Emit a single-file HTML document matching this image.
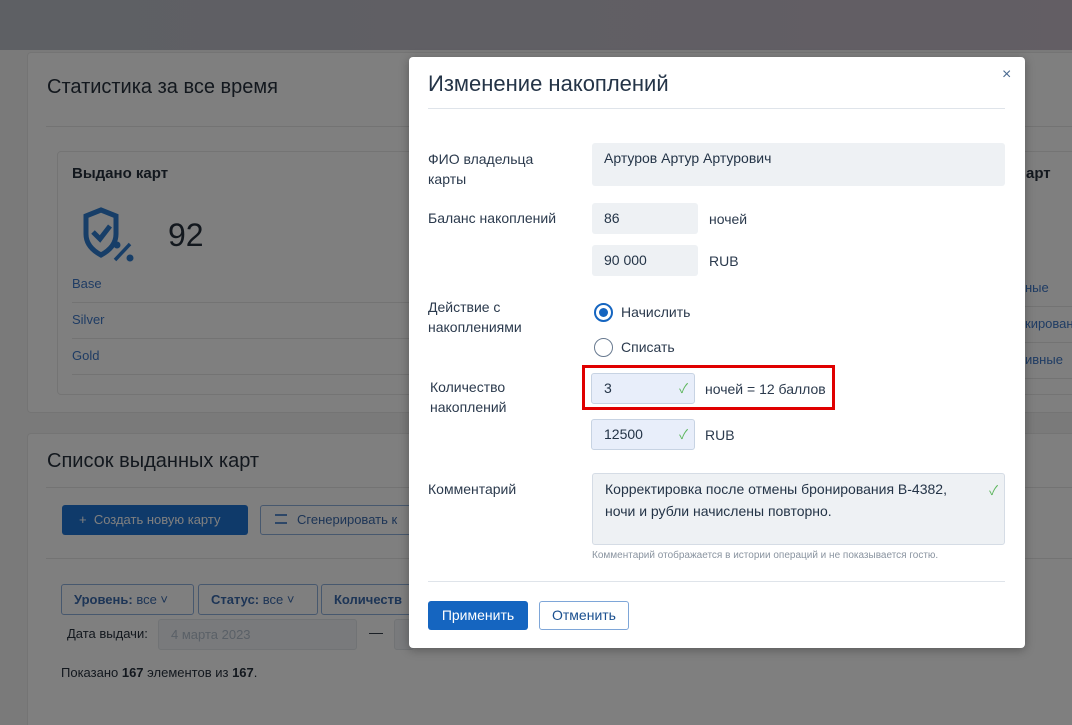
<!DOCTYPE html>
<html><head><meta charset="utf-8"><style>
*{box-sizing:border-box;margin:0;padding:0}
html,body{width:1072px;height:725px;overflow:hidden}
body{background:#f4f4f5;font-family:"Liberation Sans","Noto Sans CJK SC",sans-serif;position:relative;color:#1f2a38}
.a{position:absolute}
.top{left:0;top:0;width:1072px;height:50px;background:linear-gradient(90deg,#bcc0c8,#c6bcc8)}
.card{background:#fff;border:1px solid #e8e8e8;border-radius:4px}
.dk{color:#26303d}
.bl{color:#3f78c8}
.hr{height:1px;background:#e6e6e6}
.ov{left:0;top:0;width:1072px;height:725px;background:rgba(0,0,0,.5)}
.modal{left:409px;top:57px;width:616px;height:591px;background:#fff;border-radius:4px;box-shadow:0 2px 10px rgba(0,0,0,.3)}
.lbl{font-size:14px;color:#2b3a4d;line-height:20px}
.inp{background:#eef1f4;border-radius:3px;font-size:14px;color:#243447;padding-left:12px}
.inpv{background:#e8eefa;border:1px solid #c7d3e3;border-radius:3px;font-size:14px;color:#243447;padding-left:12px}
.ck{color:#5cb65c;font-size:13px}
</style></head><body>
<div class="a top"></div>
<div class="a card" style="left:27px;top:52px;width:1060px;height:361px"></div>
<div class="a dk" style="left:47px;top:76px;font-size:20px">Статистика за все время</div>
<div class="a hr" style="left:46px;top:126px;width:1030px"></div>
<div class="a card" style="left:57px;top:151px;width:1030px;height:244px"></div>
<div class="a dk" style="left:72px;top:165px;font-size:15px;font-weight:bold">Выдано карт</div>
<svg class="a" style="left:82px;top:207px" width="52" height="58" viewBox="0 0 52 58"><path d="M19 3 L34 9 V27 Q34 40 19 48 Q4 40 4 27 V9 Z" fill="none" stroke="#2e7dd0" stroke-width="5"/><path d="M11 25 L18 32 L28 19" fill="none" stroke="#2e7dd0" stroke-width="5"/><circle cx="35" cy="38" r="3.5" fill="#2e7dd0"/><circle cx="48" cy="51" r="3.5" fill="#2e7dd0"/><path d="M33 53 L48 37" stroke="#2e7dd0" stroke-width="3.5"/></svg>
<div class="a dk" style="left:168px;top:217px;font-size:32px">92</div>
<div class="a bl" style="left:72px;top:276px;font-size:13px">Base</div>
<div class="a hr" style="left:72px;top:302px;width:340px"></div>
<div class="a bl" style="left:72px;top:312px;font-size:13px">Silver</div>
<div class="a hr" style="left:72px;top:338px;width:340px"></div>
<div class="a bl" style="left:72px;top:348px;font-size:13px">Gold</div>
<div class="a hr" style="left:72px;top:374px;width:340px"></div>
<div class="a dk" style="left:1026px;top:165px;font-size:15px;font-weight:bold">арт</div>
<div class="a bl" style="left:1025px;top:280px;font-size:13px">ные</div>
<div class="a hr" style="left:1025px;top:306px;width:50px"></div>
<div class="a bl" style="left:1025px;top:316px;font-size:13px">кирован</div>
<div class="a hr" style="left:1025px;top:342px;width:50px"></div>
<div class="a bl" style="left:1025px;top:352px;font-size:13px">ивные</div>
<div class="a hr" style="left:1025px;top:378px;width:50px"></div>

<div class="a card" style="left:27px;top:433px;width:1060px;height:300px"></div>
<div class="a dk" style="left:47px;top:450px;font-size:20px">Список выданных карт</div>
<div class="a hr" style="left:46px;top:487px;width:1030px"></div>
<div class="a" style="left:62px;top:505px;width:186px;height:30px;background:#1e74d4;border-radius:3px;color:#fff;font-size:13px;line-height:30px;padding-left:17px">+&nbsp; Создать новую карту</div>
<div class="a" style="left:260px;top:505px;width:160px;height:30px;border:1px solid #8fb0dc;border-radius:3px;color:#3b6aad;font-size:13px;line-height:28px;padding-left:36px">Сгенерировать к</div>
<div class="a" style="left:275px;top:514px;width:12px;height:10px;border-top:2px solid #5a8ed0;border-bottom:2px solid #5a8ed0"></div>
<div class="a hr" style="left:46px;top:558px;width:1030px"></div>
<div class="a" style="left:61px;top:584px;width:133px;height:31px;border:1px solid #8fb0dc;border-radius:3px;color:#3b6aad;font-size:13px;line-height:29px;padding-left:12px"><b>Уровень:</b> все ˅</div>
<div class="a" style="left:198px;top:584px;width:120px;height:31px;border:1px solid #8fb0dc;border-radius:3px;color:#3b6aad;font-size:13px;line-height:29px;padding-left:12px"><b>Статус:</b> все ˅</div>
<div class="a" style="left:321px;top:584px;width:100px;height:31px;border:1px solid #8fb0dc;border-radius:3px;color:#3b6aad;font-size:13px;line-height:29px;padding-left:12px"><b>Количеств</b></div>
<div class="a dk" style="left:67px;top:626px;font-size:13px">Дата выдачи:</div>
<div class="a" style="left:158px;top:619px;width:199px;height:31px;background:#f2f5f8;border:1px solid #e2e6ea;border-radius:3px;color:#b4c0ce;font-size:13px;line-height:29px;padding-left:12px">4 марта 2023</div>
<div class="a" style="left:369px;top:624px;color:#26303d;font-size:14px">—</div>
<div class="a" style="left:394px;top:619px;width:20px;height:31px;background:#f2f5f8;border:1px solid #e2e6ea;border-radius:3px"></div>
<div class="a dk" style="left:61px;top:665px;font-size:13px">Показано <b>167</b> элементов из <b>167</b>.</div>

<div class="a ov"></div>
<div class="a modal"></div>
<div class="a" style="left:428px;top:71px;font-size:22px;color:#243447">Изменение накоплений</div>
<div class="a" style="left:1002px;top:66px;font-size:16px;color:#4a6a90">×</div>
<div class="a" style="left:428px;top:108px;width:577px;height:1px;background:#dfe4ea"></div>
<div class="a lbl" style="left:428px;top:149px;width:130px">ФИО владельца карты</div>
<div class="a inp" style="left:592px;top:143px;width:413px;height:43px;line-height:30px">Артуров Артур Артурович</div>
<div class="a lbl" style="left:428px;top:208px">Баланс накоплений</div>
<div class="a inp" style="left:592px;top:203px;width:106px;height:31px;line-height:31px">86</div>
<div class="a lbl" style="left:709px;top:209px">ночей</div>
<div class="a inp" style="left:592px;top:245px;width:106px;height:31px;line-height:31px">90 000</div>
<div class="a lbl" style="left:709px;top:251px">RUB</div>
<div class="a lbl" style="left:428px;top:297px">Действие с<br>накоплениями</div>
<div class="a" style="left:594px;top:303px;width:19px;height:19px;border:2px solid #1565c0;border-radius:50%"><div style="margin:3px;width:9px;height:9px;border-radius:50%;background:#1565c0"></div></div>
<div class="a lbl" style="left:621px;top:302px">Начислить</div>
<div class="a" style="left:594px;top:338px;width:19px;height:19px;border:1.5px solid #687a90;border-radius:50%"></div>
<div class="a lbl" style="left:621px;top:337px">Списать</div>
<div class="a lbl" style="left:430px;top:377px">Количество<br>накоплений</div>
<div class="a" style="left:582px;top:365px;width:253px;height:45px;border:3px solid #e00000"></div>
<div class="a inpv" style="left:591px;top:373px;width:104px;height:31px;line-height:29px">3<span class="ck" style="position:absolute;right:6px">✓</span></div>
<div class="a lbl" style="left:705px;top:379px">ночей = 12 баллов</div>
<div class="a inpv" style="left:591px;top:419px;width:104px;height:31px;line-height:29px">12500<span class="ck" style="position:absolute;right:6px">✓</span></div>
<div class="a lbl" style="left:705px;top:425px">RUB</div>
<div class="a lbl" style="left:428px;top:479px">Комментарий</div>
<div class="a inp" style="left:592px;top:473px;width:413px;height:72px;border:1px solid #d5dce5;padding:4px 30px 0 12px;line-height:22px">Корректировка после отмены бронирования В-4382, ночи и рубли начислены повторно.<span class="ck" style="position:absolute;right:6px;top:6px">✓</span></div>
<div class="a" style="left:592px;top:550px;font-size:10px;color:#8a94a0">Комментарий отображается в истории операций и не показывается гостю.</div>
<div class="a" style="left:428px;top:581px;width:577px;height:1px;background:#dfe4ea"></div>
<div class="a" style="left:428px;top:601px;width:100px;height:29px;background:#1565c0;border-radius:3px;color:#fff;font-size:14px;line-height:29px;text-align:center">Применить</div>
<div class="a" style="left:539px;top:601px;width:90px;height:29px;border:1px solid #7ea6d8;border-radius:3px;color:#1a4f8f;font-size:14px;line-height:27px;text-align:center">Отменить</div>
</body></html>
